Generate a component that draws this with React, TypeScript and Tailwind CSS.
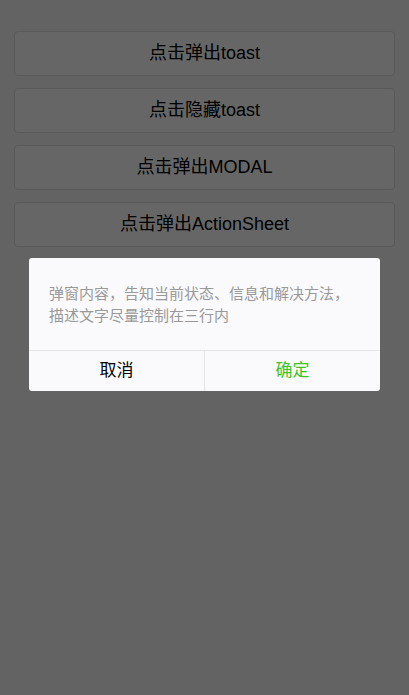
import React, { useState } from 'react';

const actions = ['点击弹出toast', '点击隐藏toast', '点击弹出MODAL', '点击弹出ActionSheet'];

export default function App() {
  const [open, setOpen] = useState(true);

  return (
    <div
      className="relative h-[695px] w-full overflow-hidden bg-[#f8f8f8]"
      style={{ fontFamily: '"Liberation Sans", "Noto Sans CJK SC", sans-serif' }}
    >
      {/* Action buttons */}
      <div className="flex flex-col gap-3 px-[14px] pt-[31px]">
        {actions.map(label => (
          <button
            key={label}
            onClick={() => setOpen(true)}
            className="h-[45px] w-full rounded-[4px] border border-[#dedede] bg-white text-[18px] text-black"
          >
            {label}
          </button>
        ))}
      </div>

      {/* Mask + dialog */}
      {open && (
        <div className="absolute inset-0 bg-black/60">
          <div className="absolute left-[29px] top-[258px] w-[351px] overflow-hidden rounded-[3px] bg-[#fafafc]">
            <div className="px-5 pt-[25px] pb-[23px] text-[15px] leading-[22px] text-[#999]">
              弹窗内容，告知当前状态、信息和解决方法，描述文字尽量控制在三行内
            </div>
            <div className="flex border-t border-[#e5e5e5]">
              <button
                onClick={() => setOpen(false)}
                className="h-10 flex-1 text-[17px] text-black"
              >
                取消
              </button>
              <div className="w-px bg-[#e5e5e5]" />
              <button
                onClick={() => setOpen(false)}
                className="h-10 flex-1 text-[17px] text-[#3cc51f]"
              >
                确定
              </button>
            </div>
          </div>
        </div>
      )}
    </div>
  );
}
